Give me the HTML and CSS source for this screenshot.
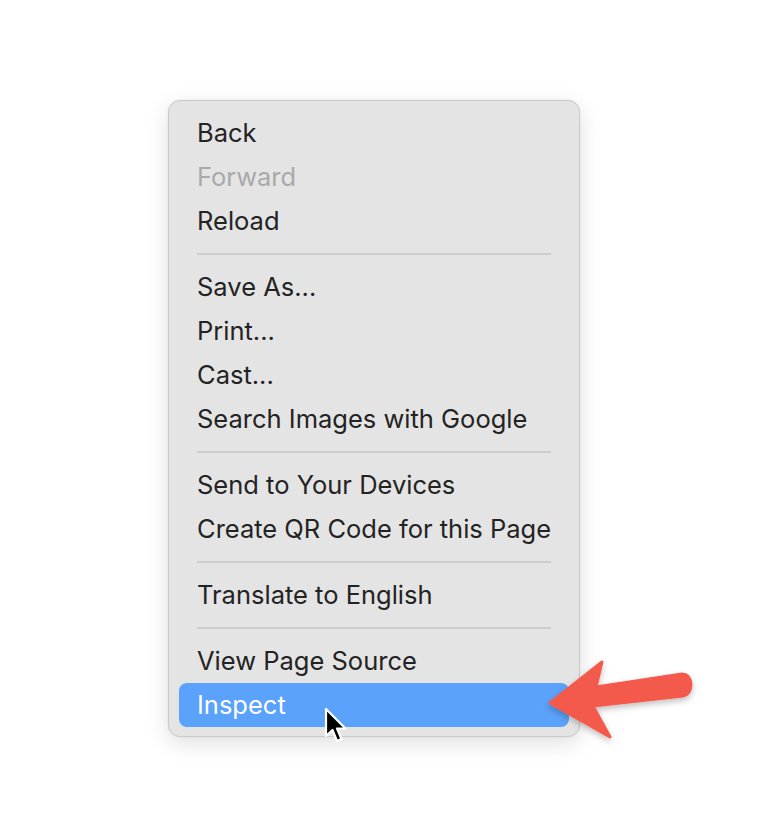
FILE: index.html
```html
<!DOCTYPE html>
<html lang="en">
<head>
    <meta charset="UTF-8">
    <meta name="viewport" content="width=device-width, initial-scale=1.0">
    <title>Context Menu</title>
    <link rel="stylesheet" href="styles.css">
</head>
<body>

<main class="stage">
    <ul class="menu">
        <li class="item">Back</li>
        <li class="item disabled">Forward</li>
        <li class="item">Reload</li>
        <li class="separator"></li>
        <li class="item">Save As...</li>
        <li class="item">Print...</li>
        <li class="item">Cast...</li>
        <li class="item">Search Images with Google</li>
        <li class="separator"></li>
        <li class="item">Send to Your Devices</li>
        <li class="item">Create QR Code for this Page</li>
        <li class="separator"></li>
        <li class="item">Translate to English</li>
        <li class="separator"></li>
        <li class="item">View Page Source</li>
        <li class="item active">Inspect</li>
    </ul>

    <!-- mouse pointer over the highlighted item -->
    <svg class="cursor" width="24" height="38" viewBox="0 0 24 38">
        <path d="M2 2 L2 29 L8.5 23 L13 34 L17.5 32 L13 21.5 L21.5 21.5 Z"
              fill="#000" stroke="#fff" stroke-width="2.2" stroke-linejoin="round"/>
    </svg>

    <!-- red annotation arrow -->
    <svg class="pointer" width="170" height="100" viewBox="0 0 170 100">
        <defs>
            <filter id="soft" x="-20%" y="-30%" width="140%" height="160%">
                <feDropShadow dx="0" dy="3" stdDeviation="3" flood-color="#000" flood-opacity="0.25"/>
            </filter>
        </defs>
        <path d="M10 53 L62 12 L56 37 L142 24 Q150 24 151 34 Q151 44 143 46 L53 56 L70 87 Z"
              fill="#f45a4b" stroke="#f45a4b" stroke-width="3" stroke-linejoin="round" filter="url(#soft)"/>
    </svg>
</main>

</body>
</html>
```

FILE: styles.css
```css
body {
    margin: 0;
    background: #ffffff;
    font-family: "Inter", "Liberation Sans", sans-serif;
}

.stage {
    position: relative;
    width: 758px;
    height: 820px;
    padding: 100px 0 0 168px;
    box-sizing: border-box;
}

.menu {
    list-style: none;
    margin: 0;
    width: 412px;
    box-sizing: border-box;
    padding: 10px 10px 9px 10px;
    background: #e4e4e4;
    border: 1px solid #c9c9c9;
    border-radius: 12px;
    box-shadow: 0 6px 22px rgba(0, 0, 0, 0.13), 0 0 2px rgba(0, 0, 0, 0.08);
}

.item {
    height: 44px;
    line-height: 44px;
    padding-left: 18px;
    font-size: 25.5px;
    color: #232323;
    border-radius: 8px;
    white-space: nowrap;
}

.item.disabled {
    color: #a9a9a9;
}

.item.active {
    background: #5aa2fb;
    color: #ffffff;
}

.separator {
    height: 22px;
    display: flex;
    align-items: center;
    padding: 0 18px;
}

.separator::after {
    content: "";
    flex: 1;
    height: 2px;
    background: #cdcdcd;
}

.cursor {
    position: absolute;
    left: 324px;
    top: 707px;
}

.pointer {
    position: absolute;
    left: 540px;
    top: 650px;
}
```
